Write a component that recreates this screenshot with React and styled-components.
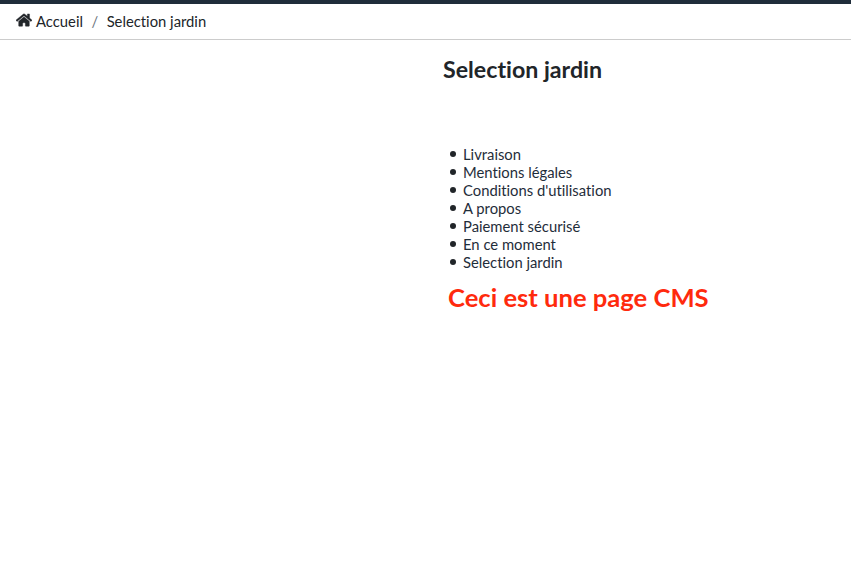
import React from "react";
import styled, { createGlobalStyle } from "styled-components";

const Global = createGlobalStyle`
  html, body { margin: 0; padding: 0; background: #fff; }
  body {
    font-family: "Lato", "Noto Sans", sans-serif;
    font-variant-ligatures: none;
    color: #212529;
  }
`;
const Page = styled.div`
  min-height: 587px;
  border-top: 4px solid #1f2d3a;
  box-sizing: border-box;
`;
const Breadcrumb = styled.nav`
  display: flex;
  align-items: center;
  height: 35px;
  box-sizing: content-box;
  height: 33px;
  padding: 0 16px 2px;
  border-bottom: 1px solid #ccc;
  font-size: 14.8px;
  color: #212529;
`;
const HomeIcon = styled.svg`
  width: 16px;
  height: 14.2px;
  margin-right: 4px;
  fill: #212529;
  stroke: #212529;
  stroke-width: 14;
`;
const Sep = styled.span`
  padding: 0 8.5px;
  color: #6c757d;
`;
const Main = styled.main`
  display: grid;
  grid-template-columns: 1fr 1fr;
`;
const Content = styled.div`
  grid-column: 2;
  padding-left: 17.5px;
`;
const Title = styled.h1`
  margin: 16px 0 0;
  font-size: 23.2px;
  line-height: 26px;
  font-weight: 700;
`;
const List = styled.ul`
  list-style: none;
  margin: 63px 0 0;
  padding: 0 0 0 7px;
  font-size: 14.8px;
  line-height: 18px;
  color: #1f2d3a;
`;
const Item = styled.li`
  display: flex;
  align-items: center;
  gap: 7px;

  &::before {
    content: "";
    width: 6px;
    height: 6px;
    border-radius: 50%;
    background: #212529;
  }
`;
const Note = styled.h2`
  margin: 11px 0 0 5px;
  font-size: 25.6px;
  line-height: 30px;
  font-weight: 700;
  color: #ff2a0d;
`;
const items = ["Livraison", "Mentions légales", "Conditions d'utilisation", "A propos", "Paiement sécurisé", "En ce moment", "Selection jardin"];
export default function App() {
  return (
    <>
      <Global />
      <Page>
        <Breadcrumb>
          <HomeIcon viewBox="0 0 576 512"><path d="M280.37 148.26L96 300.11V464a16 16 0 0 0 16 16l112.06-.29a16 16 0 0 0 15.92-16V368a16 16 0 0 1 16-16h64a16 16 0 0 1 16 16v95.64a16 16 0 0 0 16 16.05L464 480a16 16 0 0 0 16-16V300L295.67 148.26a12.19 12.19 0 0 0-15.3 0zM571.6 251.47L488 182.56V44.05a12 12 0 0 0-12-12h-56a12 12 0 0 0-12 12v72.61L318.47 43a48 48 0 0 0-61 0L4.34 251.47a12 12 0 0 0-1.6 16.9l25.5 31A12 12 0 0 0 45.15 301l235.22-193.74a12.19 12.19 0 0 1 15.3 0L530.9 301a12 12 0 0 0 16.9-1.6l25.5-31a12 12 0 0 0-1.7-16.93z" /></HomeIcon>
          <span>Accueil</span>
          <Sep>/</Sep>
          <span>Selection jardin</span>
        </Breadcrumb>
        <Main>
          <Content>
            <Title>Selection jardin</Title>
            <List>{items.map((t) => <Item key={t}>{t}</Item>)}</List>
            <Note>Ceci est une page CMS</Note>
          </Content>
        </Main>
      </Page>
    </>
  );
}
